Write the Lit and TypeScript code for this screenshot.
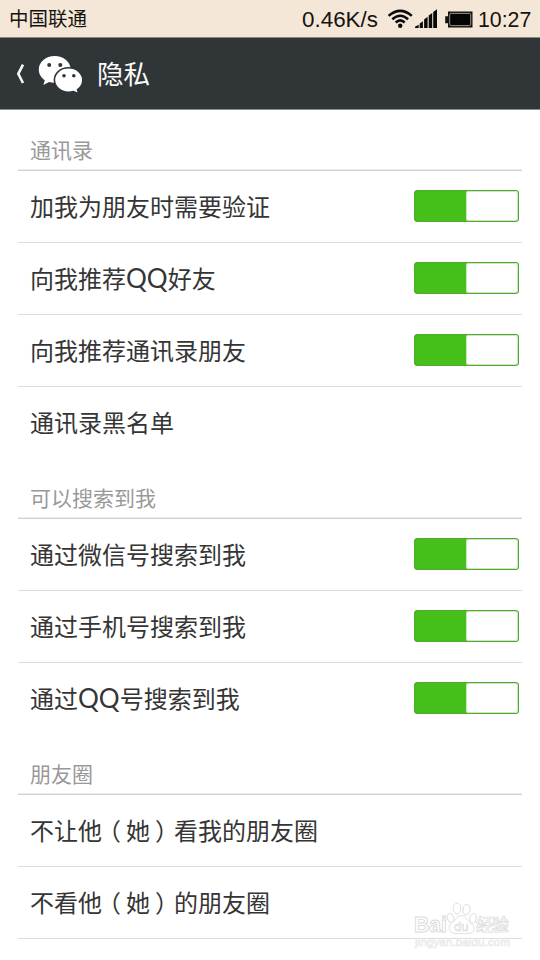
import { LitElement, html, css, nothing } from "lit";
import { customElement, property } from "lit/decorators.js";

interface Item { label: string; toggle?: boolean; }
interface Group { title: string; items: Item[]; closed?: boolean; }

const groups: Group[] = [
  {
    title: "通讯录",
    items: [
      { label: "加我为朋友时需要验证", toggle: true },
      { label: "向我推荐QQ好友", toggle: true },
      { label: "向我推荐通讯录朋友", toggle: true },
      { label: "通讯录黑名单" },
    ],
  },
  {
    title: "可以搜索到我",
    items: [
      { label: "通过微信号搜索到我", toggle: true },
      { label: "通过手机号搜索到我", toggle: true },
      { label: "通过QQ号搜索到我", toggle: true },
    ],
  },
  {
    title: "朋友圈",
    closed: true,
    items: [{ label: "不让他（她）看我的朋友圈" }, { label: "不看他（她）的朋友圈" }],
  },
];

@customElement("status-bar")
class StatusBar extends LitElement {
  static styles = css`
    :host { display: flex; align-items: center; height: 38px; box-sizing: border-box; padding: 0 10px 1px 9px;
      background: #f4e7d7; border-bottom: 1px solid #8d8984; color: #151310; font-size: 19.5px; line-height: 36px; }
    .carrier { flex: 1; }
    .latin { font-family: "Liberation Sans", Arial, sans-serif; padding-top: 3px; white-space: nowrap; }
    .speed { font-size: 22.4px; width: 76px; }
    .clock { font-size: 21.3px; width: 52px; }
    svg { display: block; margin: 2px 5px 0 10px; }
  `;
  render() {
    return html`
      <span class="carrier">中国联通</span>
      <span class="latin speed">0.46K/s</span>
      <svg width="85" height="20" viewBox="388 9 85 20">
        <g fill="none" stroke="#0b0a09" stroke-width="2.5">
          <path d="M388.6 15.9Q400.2 5.9 411.8 15.9" />
          <path d="M392.3 19.2Q400.2 12.2 408.1 19.2" />
          <path d="M395.7 22.5Q400.2 18.2 404.7 22.5" />
        </g>
        <circle cx="400.2" cy="25.7" r="2.2" fill="#0b0a09" />
        <path fill="#0b0a09" d="M415 28v-1.2l3.7-2V28zM419.700 23.500l3.200-2.300V28h-3.200zM424.100 19.500l3.500-2.700V28h-3.500zM428.700 15.600l3.500-2.700V28h-3.500zM433.200 12l3.800-2.800V28h-3.800z" />
        <path fill="#151310" d="M448 11.500h24.500v16H448v-4.200h-2.800v-7H448z" />
        <rect x="449.700" y="13.400" width="21" height="12.200" rx="1.500" fill="#050505" stroke="#b9afa4" stroke-width=".8" />
      </svg>
      <span class="latin clock">10:27</span>
    `;
  }
}

@customElement("title-bar")
class TitleBar extends LitElement {
  static styles = css`
    :host { display: flex; align-items: center; height: 72px; box-sizing: border-box; padding-left: 14px;
      background: #303538; border-bottom: 1px solid #8b8d8e; color: #fafafa; }
    .back { margin-right: 12px; }
    .logo { margin-right: 14px; }
    .title { font-size: 26.5px; line-height: 70px; padding-bottom: 1px; font-weight: 400; }
  `;
  render() {
    return html`
      <svg class="back" width="12" height="24" viewBox="14 62 12 24">
        <path d="M23 64.600L18.300 73.800L23 83" fill="none" stroke="#f6f6f6" stroke-width="2.600" />
      </svg>
      <svg class="logo" width="45" height="40" viewBox="38 53 45 40">
        <path fill="#fff" d="M54.700 55C45.800 55 38.800 61 38.800 68.600c0 4.400 2.300 8.200 6 10.700l-1.500 4.800 5.800-3c1.800.5 3.600.8 5.600.8 8.900 0 16-6 16-13.300C70.700 61 63.600 55 54.700 55z" />
        <path fill="#fff" stroke="#303538" stroke-width="1.600" d="M68.500 66.800c-7.900 0-14.100 5.300-14.100 12.100s6.200 12.300 14.100 12.300c1.800 0 3.400-.3 4.900-.7l5.400 2.300-1.300-4.200c3.300-2.200 5.300-5.700 5.300-9.700 0-6.800-6.400-12.100-14.300-12.100z" />
        <g fill="#303538"><circle cx="49.200" cy="64" r="2" /><circle cx="60.300" cy="64" r="2" /><circle cx="64" cy="74.800" r="1.800" /><circle cx="73.800" cy="74.800" r="1.800" /></g>
      </svg>
      <span class="title">隐私</span>
    `;
  }
}

@customElement("toggle-switch")
class ToggleSwitch extends LitElement {
  static styles = css`
    :host { display: flex; justify-content: flex-end; box-sizing: border-box; width: 105px; height: 32px;
      padding: 1px; border-radius: 4px; background: #45c01a; box-shadow: inset 0 0 0 1px #53a838; }
    .thumb { width: 52px; height: 30px; border-radius: 3px; background: #fff; box-shadow: inset 0 0 0 1px #c9e8be; }
  `;
  render() { return html`<span class="thumb"></span>`; }
}

@customElement("setting-group")
class SettingGroup extends LitElement {
  @property({ attribute: false }) group!: Group;
  static styles = css`
    :host { display: block; padding: 0 18px; }
    .heading { box-sizing: border-box; height: 60px; padding: 18px 12px 0; border-bottom: 1px solid #cfcfcf;
      box-shadow: 0 -1px #eeeeee inset; font-size: 21px; line-height: 40px; color: #999; }
    .row { display: flex; align-items: center; justify-content: space-between; box-sizing: border-box; height: 72px;
      padding: 0 3px 2px 12px; border-bottom: 1px solid #dcdcdc; font-size: 24px; color: #353535; }
    .row:last-child { border-bottom-color: transparent; }
    .closed .row:last-child { border-bottom-color: #dcdcdc; }
    .label { line-height: 69px; white-space: nowrap; }
    .latin { font-family: Lato, "Noto Sans", sans-serif; font-size: 26px; font-weight: 400; line-height: 1; }
    .open { margin: 0 5px 0 -5px; }
    .close { margin: 0 -5px 0 5px; }
  `;
  private label(text: string) {
    return text.split(/([A-Z]+|[（）])/).map((part) => {
      if (/^[A-Z]+$/.test(part)) return html`<span class="latin">${part}</span>`;
      if (part === "（") return html`<span class="open">${part}</span>`;
      if (part === "）") return html`<span class="close">${part}</span>`;
      return part;
    });
  }
  render() {
    return html`<section class=${this.group.closed ? "closed" : ""}>
      <div class="heading">${this.group.title}</div>
      ${this.group.items.map(
        (item) => html`<div class="row"><span class="label">${this.label(item.label)}</span>${item.toggle ? html`<toggle-switch></toggle-switch>` : nothing}</div>`
      )}
    </section>`;
  }
}

@customElement("app-root")
class AppRoot extends LitElement {
  static styles = css`
    :host { display: block; position: relative; width: 540px; height: 960px; overflow: hidden; background: #fff;
      font-family: "Noto Sans CJK SC", sans-serif; }
    .content { padding-top: 1px; }
    .watermark { position: absolute; left: 410px; top: 898px; font-family: "Liberation Sans", "Noto Sans CJK SC", sans-serif; }
    .cjk { font-family: "Noto Sans CJK SC", sans-serif; }
  `;
  render() {
    return html`
      <status-bar></status-bar>
      <title-bar></title-bar>
      <main class="content">${groups.map((g) => html`<setting-group .group=${g}></setting-group>`)}</main>
      <svg class="watermark" width="108" height="52" viewBox="410 898 108 52">
        <g fill="#fff" stroke="#dadada" stroke-width=".9">
          <text x="414" y="932" font-size="22" font-weight="700" textLength="33" lengthAdjust="spacingAndGlyphs">Bai</text>
          <ellipse cx="450.500" cy="918" rx="3.200" ry="4.500" transform="rotate(-15 450.500 918)" />
          <ellipse cx="457" cy="908.500" rx="3.800" ry="5.500" />
          <ellipse cx="466.500" cy="909.500" rx="3.600" ry="5.300" transform="rotate(10 466.500 909.500)" />
          <ellipse cx="473" cy="918.500" rx="3.200" ry="4.800" transform="rotate(12 473 918.500)" />
          <path d="M461.500 915.500c-4 0-5.500 3.500-8 6-3 2.500-5 4.500-4 8 1 4 5 4.500 12 4 7 .5 12 0 12.500-4.500.4-3.500-2.500-5-5-7.500-2.500-2.500-3.700-6-7.500-6z" />
          <text x="454" y="931" font-size="13" stroke-width=".6">du</text>
          <text class="cjk" x="476" y="931" font-size="17" font-weight="500" stroke-width=".7" textLength="33" lang="zh-CN">经验</text>
        </g>
        <text x="415" y="946" font-size="11.500" fill="#fff" fill-opacity=".5" stroke="#e5e5e5" stroke-width=".6" textLength="95">jingyan.baidu.com</text>
      </svg>
    `;
  }
}
